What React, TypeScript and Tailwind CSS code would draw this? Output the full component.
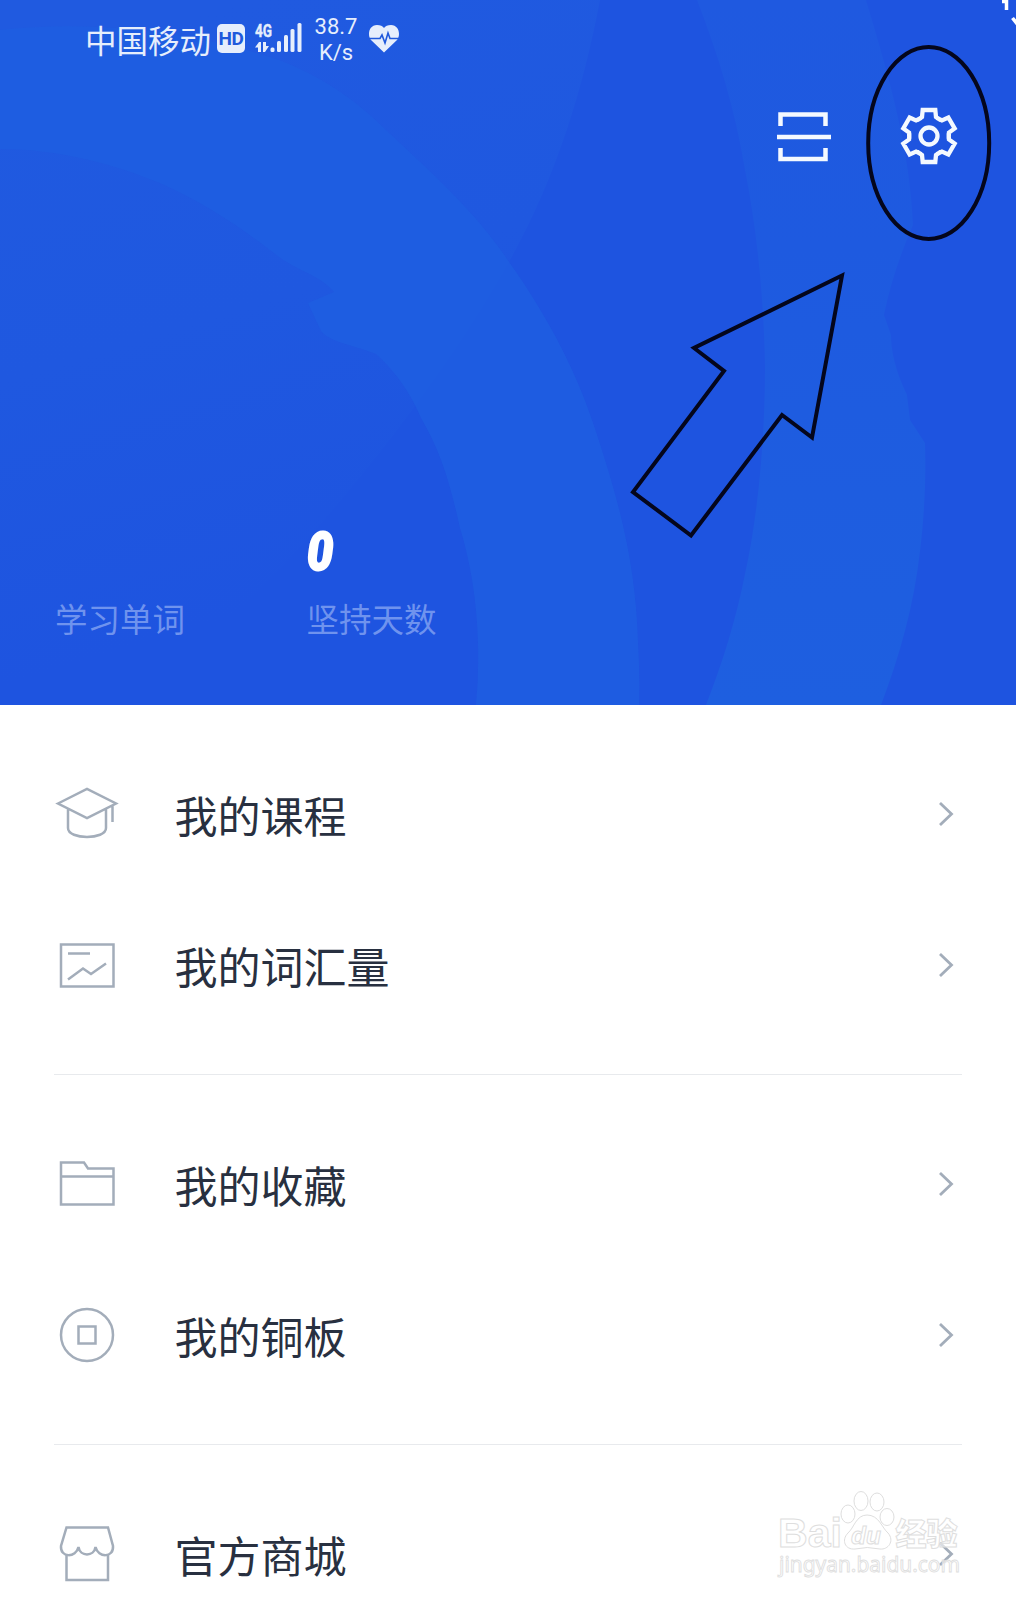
import React from "react";

const CJK = "font-['Noto_Sans_CJK_SC',sans-serif]";

function HeaderArt() {
  return (
    <svg className="absolute inset-0" width="1016" height="705" viewBox="0 0 1016 705" fill="none">
      <defs>
        <linearGradient id="left" x1="250" y1="0" x2="420" y2="560" gradientUnits="userSpaceOnUse">
          <stop offset="0" stopColor="#205ae0" />
          <stop offset="0.5" stopColor="#1f58e0" />
          <stop offset="1" stopColor="#1e54e0" />
        </linearGradient>
        <linearGradient id="band" x1="0" y1="0" x2="0" y2="705" gradientUnits="userSpaceOnUse">
          <stop offset="0" stopColor="#1f59e0" />
          <stop offset="0.35" stopColor="#1e5ae0" />
          <stop offset="0.7" stopColor="#1e5de0" />
          <stop offset="1" stopColor="#1e5fe0" />
        </linearGradient>
      </defs>
      <path d="M0 0H600C583 90 556 178 509 262C450 368 350 500 250 600L150 705H0Z" fill="url(#left)" />
      <path
        d="M0 30C90 20 190 30 279 60C330 80 362 106 389 133C440 180 480 218 509 262C550 320 578 375 596 432C622 510 636 570 638 643Q640 675 639 705H476Q479 674 478 643C477 600 470 560 460 528C450 482 440 450 421 418Q405 380 376 354C350 344 330 342 321 331L308 303L334 292C320 275 300 272 279 257C245 230 205 203 162 184C110 162 55 149 0 149Z"
        fill="#1f5ee0"
        fillOpacity="0.85"
      />
      <path
        d="M697 0C720 60 735 110 745 170C758 235 764 305 765 367C765 440 758 515 745 574C736 620 722 664 706 705H881C900 655 914 605 920 551C925 510 926 475 925 443L910 420L907 395C895 370 891 350 891 335L884 315C890 285 900 255 913 225C910 150 890 80 866 0Z"
        fill="url(#band)"
      />
      <path d="M1002 1.500H1006.500V10M1012.500 18L1018 25" stroke="#fff" strokeWidth="3.500" />
    </svg>
  );
}

function StatusBar() {
  return (
    <div className={`relative flex h-[80px] pl-[85px] text-[#e6eefc] ${CJK}`}>
      <span className="mt-[15px] h-[48px] w-[126px] whitespace-nowrap text-[31.5px] leading-[48px]">中国移动</span>
      <span className="mt-[24px] ml-[6px] flex h-[29px] w-[28px] items-center justify-center rounded-[5px] bg-[#e6eefc] font-['Roboto',sans-serif] text-[19px] font-bold leading-none tracking-[-0.5px] text-[#2059dc]">
        HD
      </span>
      <svg className="mt-[20px] ml-[9px]" width="50" height="36" viewBox="0 0 50 36" fill="currentColor">
        <text x="1" y="16.500" fontFamily="Roboto" fontWeight="700" fontSize="19" textLength="17" lengthAdjust="spacingAndGlyphs" stroke="currentColor" strokeWidth="0.400">4G</text>
        <path d="M1 27.500L5 22H7V32H4V27.500ZM9 22H12V26H15L11 32H9Z" />
        <rect x="16.500" y="27.500" width="4" height="4.500" rx="1.500" />
        <rect x="23" y="21" width="4" height="11" rx="1.500" />
        <rect x="30" y="15" width="4" height="17" rx="1.500" />
        <rect x="36.500" y="9" width="4" height="23" rx="1.500" />
        <rect x="43.500" y="3" width="4" height="29" rx="1.500" />
      </svg>
      <span className="mt-[14px] ml-[7px] w-[50px] text-center font-['Roboto',sans-serif] text-[22px] leading-[25.5px]">
        38.7
        <br />
        K/s
      </span>
      <svg className="mt-[24px] ml-[7px]" width="32" height="30" viewBox="0 0 32 30">
        <path d="M16 28.500L3 16C-1 11 1 1 9 1Q14 1 16 4Q18 1 23 1C31 1 33 11 29 16Z" fill="currentColor" />
        <path d="M1 14.500H12L14 11L17 19L20 9L22 14.500H31" fill="none" stroke="#2059dc" strokeWidth="1.600" />
      </svg>
    </div>
  );
}

function gearPath() {
  const pts: string[] = [];
  for (let i = 0; i < 6; i++) {
    const a = (i * Math.PI) / 3;
    const local = [[-12.2, -15.7], [-7, -19], [-6.3, -26], [6.3, -26], [7, -19], [12.2, -15.7]];
    local.forEach(([x, y]) => {
      const px = x * Math.cos(a) - y * Math.sin(a);
      const py = x * Math.sin(a) + y * Math.cos(a);
      pts.push(`${px.toFixed(2)} ${py.toFixed(2)}`);
    });
  }
  return `M${pts.join("L")}Z`;
}

function Header() {
  return (
    <header className="relative h-[705px] overflow-hidden bg-[#1e54e0]">
      <HeaderArt />
      <StatusBar />
      <div className="relative flex h-[112px] items-center justify-end gap-[67px] pr-[57px]">
        <svg className="-mt-[1px]" width="56" height="52" viewBox="0 0 56 52" fill="none" stroke="#f4f9ff" strokeWidth="4.500">
          <path d="M4.500 16V4.500H49.500V16M1 27H55M4.500 38V49H49.500V38" />
        </svg>
        <svg width="60" height="60" viewBox="-30 -30 60 60" fill="none" stroke="#f4f9ff" strokeWidth="4.300">
          <path d={gearPath()} />
          <circle r="8.500" />
        </svg>
      </div>
      <div className={`relative mt-[333px] grid grid-cols-[251.5px_1fr] pl-[55px] text-[#6f93ee] ${CJK}`}>
        <div className="h-[66px]" />
        <div className="h-[66px] font-['Roboto',sans-serif] text-[53px] font-black italic leading-[54px] text-white">
          <span className="inline-block origin-left scale-x-[0.88] [-webkit-text-stroke:2px_#fff]">0</span>
        </div>
        <span className="text-[32.500px] leading-[54px]">学习单词</span>
        <span className="text-[32.500px] leading-[54px]">坚持天数</span>
      </div>
      <svg className="absolute inset-0" width="1016" height="705" viewBox="0 0 1016 705" fill="none" stroke="#04061c" strokeWidth="4">
        <ellipse cx="928.700" cy="143" rx="60.500" ry="96" />
        <path d="M842 275.500L694 348L724 371L633 492L691 535.500L782 415L812 437.500Z" />
      </svg>
    </header>
  );
}

const icons: Record<string, React.ReactNode> = {
  course: <path d="M3 21.500L32 7L61 21.500L32 36ZM13 27V46C13 58 51 58 51 46V27M57.500 24V40" />,
  chart: <path d="M6 11.500H58.500V53.500H6ZM13 20.500H35M13 46.500L28 35.500L36 41L51 30.500" />,
  folder: <path d="M6 10.500H29L33 16.500H58.500V52.500H6ZM6 24.500H58.500" />,
  coin: (
    <>
      <circle cx="32" cy="32" r="26" />
      <rect x="23.500" y="23.500" width="17" height="17" />
    </>
  ),
  shop: <path d="M11.500 5.500H53L58 24C59 36 43 36 40.500 25C39 35 25 35 23.500 25C21 36 5 36 6 24ZM11.500 32V58H53V32" />,
};

function Row({ icon, label }: { icon: string; label: string }) {
  return (
    <div className="flex h-[151.500px] shrink-0 items-center">
      <svg className="ml-[1px]" width="64" height="64" viewBox="0 0 64 64" fill="none" stroke="#a3adba" strokeWidth="2.500">
        {icons[icon]}
      </svg>
      <span className={`ml-[55.5px] flex-1 text-[43px] leading-[60px] text-[#283040] ${CJK}`}>{label}</span>
      <svg className="mr-[8.5px]" width="16" height="26" viewBox="0 0 16 26" fill="none" stroke="#a3adba" strokeWidth="2.800">
        <path d="M2 2L13.500 13L2 24" />
      </svg>
    </div>
  );
}

const groups = [
  [
    { icon: "course", label: "我的课程" },
    { icon: "chart", label: "我的词汇量" },
  ],
  [
    { icon: "folder", label: "我的收藏" },
    { icon: "coin", label: "我的铜板" },
  ],
  [{ icon: "shop", label: "官方商城" }],
];

function Watermark() {
  return (
    <svg className="absolute left-[775px] top-[1485px]" width="190" height="100" viewBox="0 0 190 100" fill="#fff" fillOpacity="0.6" stroke="#dedede" strokeWidth="1">
      <text x="3" y="62" fontFamily="Liberation Sans" fontWeight="700" fontSize="40" textLength="64" lengthAdjust="spacingAndGlyphs">Bai</text>
      <ellipse cx="73" cy="29" rx="7" ry="9" />
      <ellipse cx="86" cy="16" rx="7" ry="9.500" />
      <ellipse cx="102" cy="17" rx="7" ry="9" />
      <ellipse cx="112" cy="32" rx="7" ry="8.500" />
      <path d="M92 30C104 30 107 43 113 48C120 56 113 65 105 64Q92 61 80 64C70 65 66 55 73 48C79 43 81 30 92 30Z" />
      <text x="76" y="58.500" fontFamily="Liberation Sans" fontWeight="700" fontStyle="italic" fontSize="24" textLength="30" lengthAdjust="spacingAndGlyphs">du</text>
      <text x="120.500" y="60" fontFamily="Noto Sans CJK SC" fontWeight="900" fontSize="31">经验</text>
      <text x="4" y="86.500" fontFamily="Noto Sans" fontSize="21" textLength="181" lengthAdjust="spacingAndGlyphs" strokeWidth="0.900">jingyan.baidu.com</text>
    </svg>
  );
}

export default function App() {
  return (
    <div className="relative h-[1600px] w-[1016px] overflow-hidden bg-white">
      <Header />
      <main className="px-[54px]">
        {groups.map((rows, i) => (
          <section key={i} className={i < groups.length - 1 ? "border-b border-[#e8eaed] py-[33px]" : "pt-[33px]"}>
            {rows.map((r) => (
              <Row key={r.label} icon={r.icon} label={r.label} />
            ))}
          </section>
        ))}
      </main>
      <Watermark />
    </div>
  );
}
